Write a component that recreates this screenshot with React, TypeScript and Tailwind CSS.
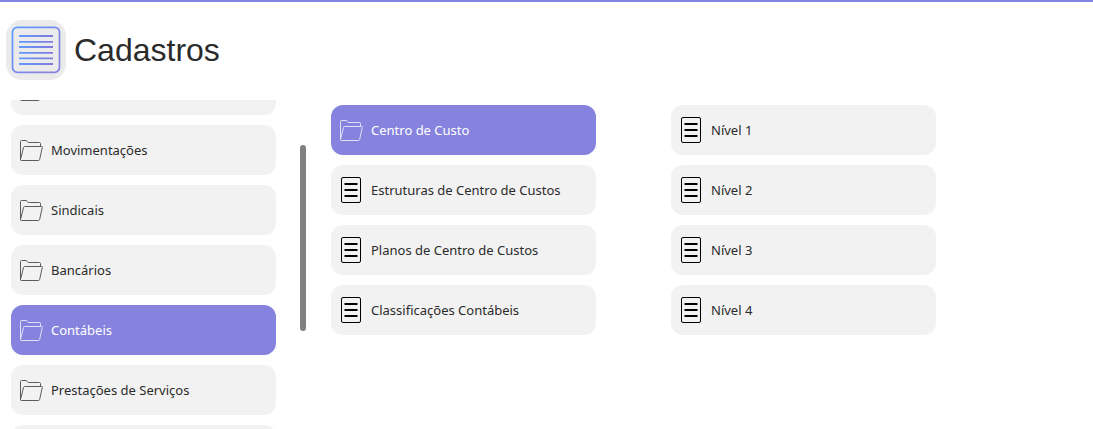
import { useLayoutEffect, useRef } from 'react';

type Item = { id: string; label: string; kind: 'folder' | 'page'; active?: boolean };

const categories: Item[] = [
  { id: 'previous', label: '', kind: 'folder' },
  { id: 'movimentacoes', label: 'Movimentações', kind: 'folder' },
  { id: 'sindicais', label: 'Sindicais', kind: 'folder' },
  { id: 'bancarios', label: 'Bancários', kind: 'folder' },
  { id: 'contabeis', label: 'Contábeis', kind: 'folder', active: true },
  { id: 'prestacoes', label: 'Prestações de Serviços', kind: 'folder' },
  { id: 'next', label: '', kind: 'folder' },
];

const groups: Item[] = [
  { id: 'centro', label: 'Centro de Custo', kind: 'folder', active: true },
  { id: 'estruturas', label: 'Estruturas de Centro de Custos', kind: 'page' },
  { id: 'planos', label: 'Planos de Centro de Custos', kind: 'page' },
  { id: 'classificacoes', label: 'Classificações Contábeis', kind: 'page' },
];

const levels: Item[] = [
  { id: 'n1', label: 'Nível 1', kind: 'page' },
  { id: 'n2', label: 'Nível 2', kind: 'page' },
  { id: 'n3', label: 'Nível 3', kind: 'page' },
  { id: 'n4', label: 'Nível 4', kind: 'page' },
];

function FolderIcon() {
  return (
    <svg viewBox="0 0 24 24" className="size-6 shrink-0 opacity-75" fill="none" stroke="currentColor" strokeWidth="1" strokeLinejoin="round" aria-hidden="true">
      <path d="M1.5 22V3.5Q1.5 2.5 2.5 2.5H7Q8 2.5 8.3 3.5T9.5 4.5H20.5Q21.5 4.5 21.5 5.5V8" />
      <path d="M1.5 21.5 4.6 9.2Q4.8 8.5 5.6 8.5H22.6Q23.5 8.5 23.3 9.3L20.6 21.6Q20.4 22.5 19.5 22.5H2.3Q1.3 22.5 1.5 21.5Z" />
    </svg>
  );
}

function PageIcon() {
  return (
    <svg viewBox="0 0 24 26" className="h-[26px] w-6 shrink-0" fill="none" stroke="#000" aria-hidden="true">
      <rect x="2.5" y="0.5" width="19" height="25" rx="1.5" />
      <path d="M5.5 7H18.5M5.5 13H18.5M5.5 19H18.5" strokeWidth="2" />
    </svg>
  );
}

function MenuButton({ item }: { item: Item }) {
  return (
    <button
      type="button"
      aria-label={item.label ? undefined : 'Categoria'}
      className={`flex h-[50px] w-full shrink-0 items-center gap-2 rounded-xl px-2 text-left text-[13px] leading-5 ${
        item.active ? 'bg-[#8683df] text-white' : 'bg-[#f2f2f2] text-[#2b2b2b]'
      }`}
    >
      {item.kind === 'folder' ? <FolderIcon /> : <PageIcon />}
      <span>{item.label}</span>
    </button>
  );
}

function Column({ items, name }: { items: Item[]; name: string }) {
  return (
    <nav aria-label={name} className="flex w-[265px] flex-col gap-2.5 py-[5px]">
      {items.map((item) => (
        <MenuButton key={item.id} item={item} />
      ))}
    </nav>
  );
}

export default function App() {
  const scroller = useRef<HTMLDivElement>(null);

  useLayoutEffect(() => {
    if (scroller.current) scroller.current.scrollTop = 40;
  }, []);

  return (
    <div className="flex h-screen flex-col overflow-hidden bg-white font-['Noto_Sans',sans-serif]">
      <div className="h-0.5 shrink-0 bg-linear-to-b from-[#8b7fdc] to-[#7c8bea]" />
      <header className="flex shrink-0 items-center gap-2 px-1.5 pt-[18px] pb-5">
        <div className="flex size-[60px] items-center justify-center rounded-2xl bg-[#ebebeb]">
          <svg viewBox="0 0 50 50" className="size-[50px]" fill="none" aria-hidden="true">
            <defs>
              <linearGradient id="frame" gradientUnits="userSpaceOnUse" x1="0" y1="10" x2="32" y2="40">
                <stop stopColor="#5f9bff" />
                <stop offset="1" stopColor="#8783df" />
              </linearGradient>
              <linearGradient id="lines" gradientUnits="userSpaceOnUse" x1="8" y1="0" x2="42" y2="0">
                <stop stopColor="#5f9bff" />
                <stop offset="1" stopColor="#8378dc" />
              </linearGradient>
            </defs>
            <rect x="1.5" y="2.25" width="47" height="45" rx="5" stroke="url(#frame)" strokeWidth="1.75" />
            <path fill="url(#lines)" d="M8 10h34v2H8zM8 16h34v1.75H8zM8 21h34v2H8zM8 27h34v1.75H8zM8 32.5h34v1.75H8zM8 38h34v2H8z" />
          </svg>
        </div>
        <h1 className="font-['Liberation_Sans',Arial,sans-serif] text-[32px] leading-10 text-[#2b2b2b]">Cadastros</h1>
      </header>
      <main className="flex min-h-0 flex-1 pl-[11px]">
        <div ref={scroller} className="h-full shrink-0 overflow-y-auto [scrollbar-width:none]">
          <Column items={categories} name="Categorias" />
        </div>
        <div className="mt-[45px] mr-[25px] ml-6 h-[186px] w-1.5 shrink-0 rounded-full bg-[#808080]" />
        <div className="flex gap-[75px]">
          <Column items={groups} name="Contábeis" />
          <Column items={levels} name="Centro de Custo" />
        </div>
      </main>
    </div>
  );
}
